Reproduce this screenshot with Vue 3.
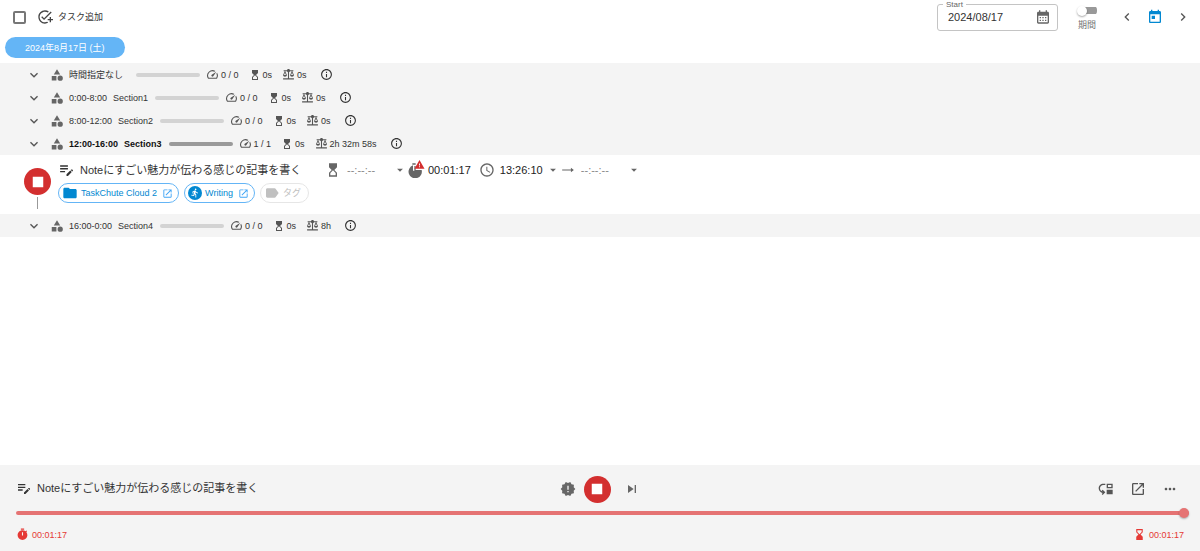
<script setup>
import { h, ref } from 'vue'

const paths = {
  addTask: 'M22 5.18 10.59 16.6l-4.24-4.24 1.41-1.41 2.83 2.83 10-10L22 5.18zM12 20c-4.41 0-8-3.59-8-8s3.59-8 8-8c1.57 0 3.04.46 4.28 1.25l1.45-1.45C16.1 2.67 14.13 2 12 2 6.48 2 2 6.48 2 12s4.48 10 10 10c1.73 0 3.36-.44 4.78-1.22l-1.5-1.5c-1 .46-2.11.72-3.28.72zm7-5h-3v2h3v3h2v-3h3v-2h-3v-3h-2v3z',
  expand: 'M16.59 8.59 12 13.17 7.41 8.59 6 10l6 6 6-6z',
  left: 'M15.41 7.41 14 6l-6 6 6 6 1.41-1.41L10.83 12z',
  right: 'M10 6 8.59 7.41 13.17 12l-4.58 4.59L10 18l6-6z',
  category: 'm12 2-5.5 9h11zM17.5 13a4.5 4.5 0 1 0 0 9 4.5 4.5 0 0 0 0-9zM3 13.5h8v8H3z',
  gauge: 'M20.38 8.57l-1.23 1.85a8 8 0 0 1-.22 7.58H5.07A8 8 0 0 1 15.58 6.85l1.85-1.23A10 10 0 0 0 3.35 19a2 2 0 0 0 1.72 1h13.85a2 2 0 0 0 1.74-1 10 10 0 0 0-.27-10.44zm-9.79 6.84a2 2 0 0 0 2.83 0l5.66-8.49-8.49 5.66a2 2 0 0 0 0 2.83z',
  hourglassTop: 'm6 2 .01 6L10 12l-3.99 4.01L6 22h12v-6l-4-4 4-3.99V2H6zm10 14.5V20H8v-3.5l4-4 4 4z',
  hourglassBottom: 'm18 22-.01-6L14 12l3.99-4.01L18 2H6v6l4 4-4 3.99V22h12zM8 7.5V4h8v3.5l-4 4-4-4z',
  balance: 'M13 7.83c.85-.3 1.53-.98 1.83-1.83H18l-3 7c0 1.66 1.57 3 3.5 3s3.5-1.34 3.5-3l-3-7h2V4h-6.17c-.41-1.17-1.52-2-2.83-2s-2.42.83-2.83 2H3v2h2l-3 7c0 1.66 1.57 3 3.5 3S9 14.66 9 13L6 6h3.17c.3.85.98 1.53 1.83 1.83V19H2v2h20v-2h-9V7.83zM20.37 13h-3.74l1.87-4.36L20.37 13zm-13 0H3.63L5.5 8.64 7.37 13z',
  info: 'M11 7h2v2h-2zm0 4h2v6h-2zm1-9C6.48 2 2 6.48 2 12s4.48 10 10 10 10-4.48 10-10S17.52 2 12 2zm0 18c-4.41 0-8-3.59-8-8s3.59-8 8-8 8 3.59 8 8-3.59 8-8 8z',
  editNote: 'M3 10h11v2H3v-2zm0-2h11V6H3v2zm0 8h7v-2H3v2zm15.01-3.13.71-.71c.39-.39 1.02-.39 1.41 0l.71.71c.39.39.39 1.02 0 1.41l-.71.71-2.12-2.12zm-.71.71-5.3 5.3V21h2.12l5.3-5.3-2.12-2.12z',
  folder: 'M10 4H4c-1.1 0-1.99.9-1.99 2L2 18c0 1.1.9 2 2 2h16c1.1 0 2-.9 2-2V8c0-1.1-.9-2-2-2h-8l-2-2z',
  open: 'M19 19H5V5h7V3H5c-1.11 0-2 .9-2 2v14c0 1.1.89 2 2 2h14c1.1 0 2-.9 2-2v-7h-2v7zM14 3v2h3.59l-9.83 9.83 1.41 1.41L19 6.41V10h2V3h-7z',
  run: 'M13.49 5.48c1.1 0 2-.9 2-2s-.9-2-2-2-2 .9-2 2 .9 2 2 2zm-3.6 13.9 1-4.4 2.1 2v6h2v-7.5l-2.1-2 .6-3c1.3 1.5 3.3 2.5 5.5 2.5v-2c-1.9 0-3.5-1-4.3-2.4l-1-1.6c-.4-.6-1-1-1.7-1-.3 0-.5.1-.8.1l-5.2 2.2v4.7h2v-3.4l1.8-.7-1.6 8.1-4.9-1-.4 2 7 1.4z',
  label: 'M17.63 5.84C17.27 5.33 16.67 5 16 5L5 5.01C3.9 5.01 3 5.9 3 7v10c0 1.1.9 1.99 2 1.99L16 19c.67 0 1.27-.33 1.63-.84L22 12l-4.37-6.16z',
  drop: 'm7 10 5 5 5-5z',
  arrow: 'M2 11h15V8l5 4-5 4v-3H2z',
  clock: 'M11.99 2C6.47 2 2 6.48 2 12s4.47 10 9.99 10C17.52 22 22 17.52 22 12S17.52 2 11.99 2zM12 20c-4.42 0-8-3.58-8-8s3.58-8 8-8 8 3.58 8 8-3.58 8-8 8zm.5-13H11v6l5.25 3.15.75-1.23-4.5-2.67z',
  elapsed: 'M8 2h5v2H8zM11 6h2v6h9A10 10 0 1 1 9 5v8h2z',
  warning: 'M1 21h22L12 2 1 21zm12-3h-2v-2h2v2zm0-4h-2v-4h2v4z',
  calendar: 'M19 4h-1V2h-2v2H8V2H6v2H5c-1.11 0-1.99.9-1.99 2L3 20c0 1.1.89 2 2 2h14c1.1 0 2-.9 2-2V6c0-1.1-.9-2-2-2zm0 16H5V10h14v10zM9 14H7v-2h2v2zm4 0h-2v-2h2v2zm4 0h-2v-2h2v2zm-8 4H7v-2h2v2zm4 0h-2v-2h2v2zm4 0h-2v-2h2v2z',
  today: 'M19 3h-1V1h-2v2H8V1H6v2H5c-1.11 0-1.99.9-1.99 2L3 19c0 1.1.89 2 2 2h14c1.1 0 2-.9 2-2V5c0-1.1-.9-2-2-2zm0 16H5V8h14v11zM7 10h5v5H7z',
  alert: 'm23 12-2.44-2.78.34-3.68-3.61-.82-1.89-3.18L12 3 8.6 1.54 6.71 4.72l-3.61.81.34 3.68L1 12l2.44 2.78-.34 3.69 3.61.82 1.89 3.18L12 21l3.4 1.46 1.89-3.18 3.61-.82-.34-3.68L23 12zm-10 5h-2v-2h2v2zm0-4h-2V7h2v6z',
  next: 'm6 18 8.5-6L6 6v12zM16 6v12h2V6h-2z',
  move: 'M3 11c0 2.45 1.76 4.47 4.08 4.91l-1.49-1.49L7 13l4 4.01L7 21l-1.41-1.41 1.58-1.58v-.06C3.7 17.54 1 14.58 1 11c0-3.87 3.13-7 7-7h3v2H8c-2.76 0-5 2.24-5 5zM22 11V4h-9v7h9zm-2-2h-5V6h5v3zM13 13h9v7h-9z',
  more: 'M6 10c-1.1 0-2 .9-2 2s.9 2 2 2 2-.9 2-2-.9-2-2-2zm12 0c-1.1 0-2 .9-2 2s.9 2 2 2 2-.9 2-2-.9-2-2-2zm-6 0c-1.1 0-2 .9-2 2s.9 2 2 2 2-.9 2-2-.9-2-2-2z',
  timer: 'M9 1h6v2H9zM19.03 7.39l1.42-1.42c-.43-.51-.9-.99-1.41-1.41l-1.42 1.42C16.07 4.74 14.12 4 12 4c-4.97 0-9 4.03-9 9s4.02 9 9 9 9-4.03 9-9c0-2.12-.74-4.07-1.97-5.61zM13 14h-2V8h2v6z',
  stop: 'M5 5h14v14H5z',
}

const Icon = (props) =>
  h('svg', { viewBox: '0 0 24 24', width: props.size, height: props.size, fill: 'currentColor', 'aria-hidden': 'true' }, [
    h('path', { d: paths[props.name] }),
  ])
Icon.props = ['name', 'size']

const taskTitle = 'Noteにすごい魅力が伝わる感じの記事を書く'
const date = ref('2024/08/17')
const startTime = ref('13:26:10')
const estimate = ref('')
const endTime = ref('')
const progress = ref(100)

const sections = [
  { time: '時間指定なし', name: '', count: '0 / 0', estimate: '0s', balance: '0s' },
  { time: '0:00-8:00', name: 'Section1', count: '0 / 0', estimate: '0s', balance: '0s' },
  { time: '8:00-12:00', name: 'Section2', count: '0 / 0', estimate: '0s', balance: '0s' },
  { time: '12:00-16:00', name: 'Section3', count: '1 / 1', estimate: '0s', balance: '2h 32m 58s', current: true },
  { time: '16:00-0:00', name: 'Section4', count: '0 / 0', estimate: '0s', balance: '8h' },
]
</script>

<template>
  <div class="page">
    <header class="toolbar">
      <input class="select-all" type="checkbox" aria-label="すべて選択" />
      <button class="add"><Icon name="addTask" size="16" />タスク追加</button>
      <fieldset class="date-field">
        <legend><label for="start-date">Start</label></legend>
        <input id="start-date" v-model="date" type="text" size="8" />
        <button aria-label="カレンダー"><Icon name="calendar" size="16" /></button>
      </fieldset>
      <label class="period"><input type="checkbox" role="switch" /><span>期間</span></label>
      <nav class="days">
        <button aria-label="前日"><Icon name="left" size="16" /></button>
        <button class="today" aria-label="今日"><Icon name="today" size="16" /></button>
        <button aria-label="翌日"><Icon name="right" size="16" /></button>
      </nav>
    </header>

    <button class="day-pill">2024年8月17日 (土)</button>

    <main>
      <template v-for="s in sections" :key="s.time">
        <section class="section-row" :class="{ current: s.current }">
          <button class="toggle" aria-label="開閉"><Icon name="expand" size="16" /></button>
          <Icon class="category" name="category" size="14" />
          <span class="time">{{ s.time }}</span>
          <span class="name">{{ s.name }}</span>
          <span class="bar"></span>
          <span class="stat"><Icon name="gauge" size="13" />{{ s.count }}</span>
          <span class="stat"><Icon name="hourglassTop" size="12" />{{ s.estimate }}</span>
          <span class="stat"><Icon name="balance" size="13" />{{ s.balance }}</span>
          <button class="info" aria-label="詳細"><Icon name="info" size="13" /></button>
        </section>

        <article v-if="s.current" class="task">
          <div class="rail">
            <button class="stop" aria-label="停止"><Icon name="stop" size="18" /></button>
            <span class="line"></span>
          </div>
          <div class="body">
            <div class="task-line">
              <div class="title"><Icon name="editNote" size="17" /><span>{{ taskTitle }}</span></div>
              <div class="times">
                <Icon name="hourglassTop" size="16" />
                <input v-model="estimate" class="wide" placeholder="--:--:--" aria-label="見積時間" />
                <button aria-label="見積候補"><Icon name="drop" size="14" /></button>
                <span class="elapsed">
                  <Icon name="elapsed" size="16" />
                  <Icon class="badge" name="warning" size="11" />
                </span>
                <span class="actual">00:01:17</span>
                <Icon name="clock" size="16" />
                <input v-model="startTime" class="start" aria-label="開始時刻" />
                <button aria-label="開始候補"><Icon name="drop" size="14" /></button>
                <Icon class="to" name="arrow" size="14" />
                <input v-model="endTime" class="end" placeholder="--:--:--" aria-label="終了時刻" />
                <button aria-label="終了候補"><Icon name="drop" size="14" /></button>
              </div>
            </div>
            <div class="chips">
              <button class="chip"><Icon name="folder" size="16" />TaskChute Cloud 2<Icon class="link" name="open" size="11" /></button>
              <button class="chip"><span class="mode"><Icon name="run" size="10" /></span>Writing<Icon class="link" name="open" size="11" /></button>
              <button class="chip empty"><Icon name="label" size="16" />タグ</button>
            </div>
          </div>
        </article>
      </template>
    </main>

    <footer class="player">
      <div class="controls">
        <div class="title"><Icon name="editNote" size="16" /><span>{{ taskTitle }}</span></div>
        <div class="center">
          <button aria-label="注意"><Icon name="alert" size="16" /></button>
          <button class="stop" aria-label="停止"><Icon name="stop" size="18" /></button>
          <button aria-label="次へ"><Icon name="next" size="16" /></button>
        </div>
        <div class="actions">
          <button aria-label="移動"><Icon name="move" size="16" /></button>
          <button aria-label="開く"><Icon name="open" size="16" /></button>
          <button aria-label="その他"><Icon name="more" size="16" /></button>
        </div>
      </div>
      <input v-model="progress" class="slider" type="range" min="0" max="100" aria-label="進捗" />
      <div class="clocks">
        <span><Icon name="timer" size="13" />00:01:17</span>
        <span><Icon name="hourglassBottom" size="13" />00:01:17</span>
      </div>
    </footer>
  </div>
</template>

<style>
body {
  margin: 0;
  background: #fff;
}
</style>

<style scoped>
.page {
  display: flex;
  flex-direction: column;
  min-height: 100vh;
  font: 9px/12px "Liberation Sans", "Noto Sans CJK JP", sans-serif;
  color: #333;
}
svg {
  display: block;
  flex: none;
}
button,
input {
  font: inherit;
  color: inherit;
  margin: 0;
  padding: 0;
  border: 0;
  background: none;
}
button {
  display: flex;
  align-items: center;
  justify-content: center;
  flex: none;
  cursor: pointer;
}
input[type="checkbox"] {
  appearance: none;
}

.toolbar {
  display: flex;
  align-items: center;
  height: 34px;
  padding: 0 9px 0 13px;
}
.toolbar input.select-all {
  box-sizing: border-box;
  width: 13px;
  height: 13px;
  border: 2px solid #777;
  border-radius: 2px;
}
.add {
  gap: 5px;
  margin-left: 11px;
}
.add svg {
  color: #444;
}
.date-field {
  display: flex;
  align-items: center;
  box-sizing: border-box;
  width: 121px;
  height: 31px;
  margin: 0 0 4px auto;
  padding: 0 6px 4px 10px;
  border: 1px solid #c4c4c4;
  border-radius: 3px;
  font-size: 11px;
}
.date-field legend {
  padding: 0 3px;
  margin-left: -5px;
  font-size: 8px;
  line-height: 9px;
  color: #666;
}
.date-field input {
  flex: 1;
  width: 60px;
  min-width: 0;
}
.date-field button {
  color: #666;
}
.period {
  display: flex;
  flex-direction: column;
  align-items: center;
  gap: 4px;
  margin-left: 19px;
  padding-top: 3px;
  color: #757575;
}
.period input {
  position: relative;
  width: 20px;
  height: 9px;
  background: linear-gradient(#999, #999) 8px 1px / 12px 7px no-repeat;
  border-radius: 4px;
}
.period input::before {
  content: "";
  position: absolute;
  left: 0;
  top: 0;
  width: 10px;
  height: 10px;
  border-radius: 50%;
  background: #fff;
  box-shadow: 0 1px 2px rgba(0, 0, 0, 0.35);
}
.days {
  display: flex;
  gap: 12px;
  margin-left: 22px;
  color: #555;
}
.today {
  color: #0288d1;
}

.day-pill {
  align-self: flex-start;
  height: 21px;
  margin: 3px 0 5px 5px;
  padding: 0 20px;
  border-radius: 11px;
  background: #64b5f6;
  color: #fff;
}

.section-row {
  display: flex;
  align-items: center;
  height: 23px;
  padding-left: 26px;
  background: #f4f4f4;
}
.toggle {
  color: #555;
}
.category {
  margin: 0 5px 0 8px;
  color: #666;
}
.name {
  margin: 0 7px 0 6px;
}
.bar {
  width: 64px;
  height: 4px;
  margin-right: 6px;
  border-radius: 2px;
  background: #d3d3d3;
}
.current .time,
.current .name {
  font-weight: bold;
  color: #111;
}
.current .bar {
  background: #9a9a9a;
}
.stat {
  display: flex;
  align-items: center;
  gap: 2px;
  margin-right: 10px;
}
.stat svg {
  color: #555;
}
.info {
  margin-left: 3px;
}

.task {
  display: flex;
  height: 59px;
  padding-left: 24px;
}
.rail {
  display: flex;
  flex-direction: column;
  align-items: center;
  gap: 2px;
  padding-top: 13px;
}
.stop {
  width: 27px;
  height: 27px;
  border-radius: 50%;
  background: #d32f2f;
  color: #fff;
}
.line {
  width: 1px;
  height: 12px;
  background: #999;
}
.body {
  flex: 1;
  padding: 6px 0 0 7px;
}
.task-line {
  display: flex;
  align-items: center;
  height: 17px;
}
.title {
  display: flex;
  align-items: center;
  gap: 5px;
  width: 267px;
  font-size: 11px;
  line-height: 16px;
  white-space: nowrap;
}
.times {
  display: flex;
  align-items: center;
  font-size: 11px;
  line-height: 14px;
  color: #666;
}
.times input::placeholder {
  color: #888;
  opacity: 1;
}
.times .wide {
  width: 46px;
  margin-left: 6px;
}
.elapsed {
  position: relative;
}
.badge {
  position: absolute;
  left: 7px;
  top: -3px;
  color: #d32f2f;
}
.actual {
  margin: 0 8px 0 5px;
  color: #222;
}
.times .start {
  width: 46px;
  margin-left: 5px;
  color: #222;
}
.to {
  margin: 0 6px 0 1px;
}
.times .end {
  width: 46px;
}
.chips {
  display: flex;
  gap: 5px;
  margin-top: 5px;
}
.chip {
  box-sizing: border-box;
  height: 20px;
  gap: 3px;
  padding: 0 5px 0 3px;
  border: 1px solid #64b5f6;
  border-radius: 10px;
  color: #0288d1;
}
.link {
  margin-left: 2px;
  color: #42a5f5;
}
.mode {
  display: grid;
  place-items: center;
  width: 14px;
  height: 14px;
  border-radius: 50%;
  background: #0288d1;
  color: #fff;
}
.empty {
  padding-right: 7px;
  border-color: #e6e6e6;
  color: #c0c0c0;
}

.player {
  margin-top: auto;
  background: #f4f4f4;
}
.controls {
  display: grid;
  grid-template-columns: 1fr auto 1fr;
  align-items: center;
  height: 44px;
  padding: 2px 22px 0 16px;
}
.controls .title {
  padding-bottom: 2px;
}
.center {
  display: flex;
  align-items: center;
  color: #666;
}
.center .stop {
  margin: 0 13px 0 8px;
}
.actions {
  display: flex;
  justify-content: flex-end;
  gap: 16px;
  color: #555;
}
.center {
  padding-left: 5px;
}
.slider {
  appearance: none;
  display: block;
  width: calc(100% - 27px);
  height: 4px;
}
input.slider {
  margin: 0 11px 0 16px;
}
.slider::-webkit-slider-runnable-track {
  height: 4px;
  border-radius: 2px;
  background: #e57373;
}
.slider::-webkit-slider-thumb {
  appearance: none;
  width: 10px;
  height: 10px;
  margin-top: -3px;
  border-radius: 50%;
  background: #e57373;
  box-shadow: 0 1px 2px rgba(0, 0, 0, 0.3);
}
.clocks {
  display: flex;
  justify-content: space-between;
  padding: 13px 16px 10px;
  color: #e53935;
}
.clocks span {
  display: flex;
  align-items: center;
  gap: 3px;
}
</style>
